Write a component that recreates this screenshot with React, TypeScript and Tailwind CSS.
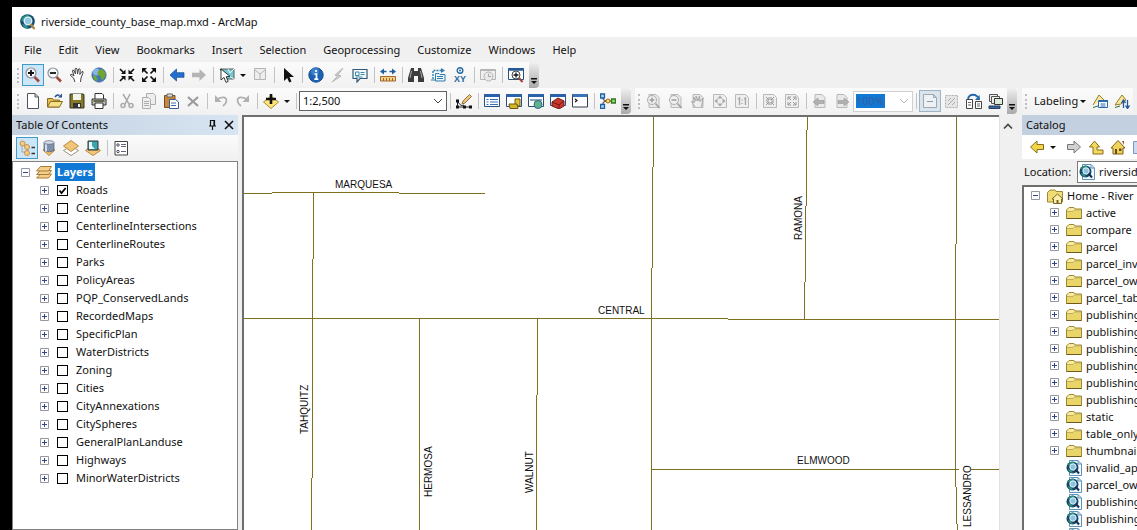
import { useState } from "react";
import type { ReactNode } from "react";

const layerNames = [
  "Roads",
  "Centerline",
  "CenterlineIntersections",
  "CenterlineRoutes",
  "Parks",
  "PolicyAreas",
  "PQP_ConservedLands",
  "RecordedMaps",
  "SpecificPlan",
  "WaterDistricts",
  "Zoning",
  "Cities",
  "CityAnnexations",
  "CitySpheres",
  "GeneralPlanLanduse",
  "Highways",
  "MinorWaterDistricts",
];

const menus = [
  "File",
  "Edit",
  "View",
  "Bookmarks",
  "Insert",
  "Selection",
  "Geoprocessing",
  "Customize",
  "Windows",
  "Help",
];

const catalogFolders = [
  "active",
  "compare",
  "parcel",
  "parcel_invalid",
  "parcel_owner",
  "parcel_table",
  "publishing",
  "publishing",
  "publishing",
  "publishing",
  "publishing",
  "publishing",
  "static",
  "table_only",
  "thumbnails",
];

const catalogMaps = ["invalid_apn", "parcel_owner", "publishing", "publishing", "publishing"];

// Street lines, one step per pixel drift
const roads = [
  "M0 76.5H28M28 75.5H155M155 76.5H241",
  "M69.5 75V142M68.5 142V361M67.5 361V2000",
  "M0 201.5H484M484 202.5H2000",
  "M175.5 201V2000",
  "M293.5 201V278M292.5 278V2000",
  "M409.5 0V50M408.5 50V151M407.5 151V2000",
  "M563.5 0V13M562.5 13V89M561.5 89V165M560.5 165V202",
  "M712.5 0V127M711.5 127V370M712.5 370V407M713.5 407V2000",
  "M407 352.5H715M727 352.5H2000",
];

const streets = [
  { name: "MARQUESA", x: 91, y: 71, vertical: false },
  { name: "CENTRAL", x: 354, y: 197, vertical: false },
  { name: "ELMWOOD", x: 553, y: 347, vertical: false },
  { name: "RAMONA", x: 558, y: 123, vertical: true },
  { name: "TAHQUITZ", x: 64, y: 317, vertical: true },
  { name: "HERMOSA", x: 188, y: 380, vertical: true },
  { name: "WALNUT", x: 289, y: 376, vertical: true },
  { name: "LESSANDRO", x: 727, y: 410, vertical: true },
];

const page = <path d="M3 1.5h7l3 3v10H3z" fill="#e9e9e9" stroke="#b9b9b9" />;

const glyphs: Record<string, ReactNode> = {
  zoomIn: (
    <>
      <path d="M9.5 10l4.5 4.5" stroke="#a0463c" strokeWidth="2.5" />
      <circle cx="6" cy="6" r="5" fill="#f4f8fb" stroke="#8d8f96" strokeWidth="1.2" />
      <path d="M3 6h6M6 3v6" stroke="#111" strokeWidth="1.8" />
    </>
  ),
  zoomOut: (
    <>
      <path d="M9.5 10l4.5 4.5" stroke="#a0463c" strokeWidth="2.5" />
      <circle cx="6" cy="6" r="5" fill="#f4f8fb" stroke="#8d8f96" strokeWidth="1.2" />
      <path d="M3 6h6" stroke="#111" strokeWidth="1.8" />
    </>
  ),
  hand: (
    <path
      d="M6 15L4.500 11 1.500 8.500Q1 7 3 7.500L5 9 3.500 4Q3.500 2.500 5 3.500L6.500 7 6 2Q7 .5 8 2l.6 5L9.500 2Q11 1 11.200 3L10.800 7.500 13 4.500Q14.500 4 14 6l-2 5-.5 4"
      fill="#fff"
      stroke="#444"
    />
  ),
  globe: (
    <>
      <circle cx="8" cy="8" r="7.200" fill="#3d78c4" stroke="#44648c" strokeWidth=".6" />
      <circle cx="5.500" cy="5" r="3.600" fill="#9cc7f0" opacity=".75" />
      <path d="M7 4l4-2 3 3 .5 4-2.500 4-2-1-.5-3-3-1zM2 8l3 1 1.500 3-1 2.500Q2 12.500 2 8z" fill="#72a52e" />
    </>
  ),
  shrink: (
    <>
      <path d="M1 2l4 4M15 2l-4 4M1 14l4-4M15 14l-4-4" stroke="#111" strokeWidth="1.700" />
      <path d="M6.500 2.500v4.500H2zM9.500 2.500v4.500H14zM6.500 13.500V9H2zM9.500 13.500V9H14z" fill="#111" />
    </>
  ),
  expand: (
    <>
      <path d="M2 2l4.500 4.500M14 2L9.500 6.500M2 14l4.500-4.500M14 14L9.500 9.500" stroke="#111" strokeWidth="1.700" />
      <path d="M1 1h5L1 6zM15 1h-5l5 5zM1 15h5l-5-5zM15 15h-5l5-5z" fill="#111" />
    </>
  ),
  back: <path d="M1 8l6.500-6v3.700H15v4.600H7.500V14z" fill="#2270d0" stroke="#14488f" strokeWidth=".7" />,
  forward: <path d="M15 8L8.500 2v3.700H1v4.600h7.500V14z" fill="#b5b5b5" />,
  selectFeatures: (
    <>
      <path d="M1 2h14v10H8z" fill="#78c8d0" stroke="#3a3a3a" strokeWidth=".8" />
      <path d="M9 2l2 4 4-4M8 8l7 4" stroke="#eef" fill="none" />
      <path d="M2 2v11l3-2.600 2 5 2.200-1-2-4.700 3.800-.3z" fill="#fff" stroke="#222" strokeWidth=".9" />
    </>
  ),
  clearSelection: (
    <>
      <path d="M2.500 1.500h11v11h-11z" fill="#eee" stroke="#b4b4b4" />
      <path d="M3 3l5 4v5M8 7l5-4" fill="none" stroke="#b4b4b4" />
    </>
  ),
  pointer: <path d="M4 1v13l3.200-3 2 4.500 2.300-1-2-4.500H14z" fill="#111" />,
  info: (
    <>
      <circle cx="8" cy="8" r="7.200" fill="#1b62b4" stroke="#164a8c" />
      <circle cx="7" cy="4.500" r="4" fill="#5e9fe0" opacity=".5" />
      <path d="M8 3v2M6.500 7H8.500v5M6.300 12.200h4" stroke="#fff" strokeWidth="1.700" fill="none" />
    </>
  ),
  lightning: <path d="M13 1L5 8l3 .6L2 15l9-6-3-1z" fill="#d4d4d4" stroke="#b5b5b5" />,
  popup: (
    <>
      <path d="M1 2.500h14v9H8L5 15v-3.500H1z" fill="#f4fafc" stroke="#355a75" strokeWidth="1.200" />
      <path d="M3.500 5h3.500v3.500H3.500zM8.500 5.500h4M8.500 7.500h4M3.500 10h7" stroke="#3a87a8" fill="none" />
    </>
  ),
  measure: (
    <>
      <path d="M3 4.500h3.500M9.500 4.500H13" stroke="#1d5e9c" strokeWidth="1.500" />
      <path d="M0 4.500L4 1.500v6zM16 4.500l-4-3v6z" fill="#1d5e9c" />
      <path d="M.5 9.500h15V14H.5z" fill="#f1cf83" stroke="#a5662b" />
      <path d="M3.500 11v3M6.500 11v3M9.500 11v3M12.500 11v3" stroke="#a5662b" />
    </>
  ),
  binoculars: (
    <>
      <path d="M3 1h3v3h4V1h3l3 10v4h-6V9H6v6H0v-4z" fill="#3c3c3c" />
      <path d="M3.500 4L2 11M12.500 4L14 11" stroke="#aaa" />
    </>
  ),
  route: (
    <>
      <path d="M3 12V3.500h9" fill="none" stroke="#2d7cab" strokeDasharray="2 1" strokeWidth="1.400" />
      <path d="M11 1l4 2.500L11 6z" fill="#2d7cab" />
      <path d="M5.500 6.500H9l1 1h5v6.500H5.500z" fill="#eaf5fb" stroke="#2d7cab" />
      <path d="M7 9.500h6M7 11.500h6M1 13h4" stroke="#2d7cab" />
    </>
  ),
  xy: (
    <>
      <circle cx="8" cy="3.500" r="2.800" fill="#fff" stroke="#2468a0" strokeWidth="1.400" />
      <circle cx="8" cy="3.500" r="1" fill="#2468a0" />
      <text x="8" y="15" textAnchor="middle" fill="#2468a0" className="font-['Liberation_Sans',sans-serif] text-[9px] font-bold">
        XY
      </text>
    </>
  ),
  time: (
    <>
      <path d="M.5 2.500h15v10H.5z" fill="#eee" stroke="#b5b5b5" />
      <path d="M.5 3h15" stroke="#b5b5b5" strokeWidth="2" />
      <circle cx="8.500" cy="9.500" r="4.500" fill="#e9e9e9" stroke="#b5b5b5" />
      <path d="M8.500 6.500v3h2.500" stroke="#aaa" fill="none" />
    </>
  ),
  viewer: (
    <>
      <path d="M.5 1.500h15v11H.5z" fill="#fff" stroke="#27507f" />
      <path d="M.5 2.500h15" stroke="#27599a" strokeWidth="2.500" />
      <path d="M11 11l3.500 4" stroke="#a0463c" strokeWidth="2" />
      <circle cx="8" cy="8" r="4" fill="#fff" stroke="#444" />
      <path d="M5.500 8h5M8 5.500v5" stroke="#111" strokeWidth="1.300" />
    </>
  ),
  newDoc: <path d="M2.500 .5h7.500l3.500 3.500v11.500h-11zM10 .5V4h3.500" fill="#fff" stroke="#4c5460" />,
  open: (
    <>
      <path d="M.5 14V5.500h5l1 1.500h6v7z" fill="#e2bf4e" stroke="#8a6d1c" />
      <path d="M.5 14l3-5.500h12L12.500 14z" fill="#f5e08a" stroke="#8a6d1c" />
      <path d="M8 4q2-3 4.500-1.500" stroke="#24508c" strokeWidth="1.500" fill="none" />
      <path d="M11 4.500h4V.5z" fill="#24508c" />
    </>
  ),
  save: (
    <>
      <path d="M1 1h13.500L15 2v13H1z" fill="#857923" stroke="#333" />
      <path d="M4 1h8v6H4z" fill="#f3f3ee" />
      <path d="M4 10h8v5H4z" fill="#333" />
      <path d="M9 11h2v3H9z" fill="#eee" />
    </>
  ),
  print: (
    <>
      <path d="M4 6V.5h7l1.500 1.500v4" fill="#fff" stroke="#333" />
      <path d="M1 6h14v6H1z" fill="#c4c4bc" stroke="#333" />
      <path d="M4 10h8v5.500H4z" fill="#fff" stroke="#333" />
      <path d="M2.500 8h11" stroke="#4a4a2a" strokeWidth="1.500" />
    </>
  ),
  cut: (
    <g fill="none" stroke="#aaa" strokeWidth="1.500">
      <path d="M4 1l6 10M11 1L6 11" />
      <circle cx="4" cy="12.500" r="2" />
      <circle cx="12" cy="12.500" r="2" />
    </g>
  ),
  copy: (
    <g fill="#eee" stroke="#adadad">
      <path d="M5.500 .5h7l2 2v9h-9z" />
      <path d="M1.500 4.500h6l2 2v9h-8z" />
      <path d="M3 8.500h5M3 10.500h5M3 12.500h5" />
    </g>
  ),
  paste: (
    <>
      <path d="M1.500 2.500h10.500v12h-10.500z" fill="#c9873e" stroke="#7a4d1c" />
      <path d="M4 1h5.500v3H4z" fill="#ddd" stroke="#666" />
      <path d="M6.500 6.500h6l3 2.500v6.500h-9z" fill="#fff" stroke="#3c5c8c" />
      <path d="M8 10h5M8 12.500h5" stroke="#3c6cae" />
    </>
  ),
  remove: <path d="M3 4l10 9M13 4L3 13" stroke="#9b9b9b" strokeWidth="2.200" />,
  undo: (
    <>
      <path d="M4 6q9-4 9.500 1.500Q13.500 10 10 13" fill="none" stroke="#b0b0b0" strokeWidth="1.700" />
      <path d="M2 2v7h6.500z" fill="#b0b0b0" />
    </>
  ),
  redo: (
    <>
      <path d="M12 6Q3 2 2.500 7.500 2.500 10 6 13" fill="none" stroke="#b0b0b0" strokeWidth="1.700" />
      <path d="M14 2v7H7.500z" fill="#b0b0b0" />
    </>
  ),
  addData: (
    <>
      <path d="M8 3l7.500 6L8 15.500.5 9z" fill="#ffe37c" stroke="#b18b2d" />
      <path d="M3 6h10M8 1v10" stroke="#111" strokeWidth="2.600" />
    </>
  ),
  editor: (
    <>
      <path d="M1.500 8v6H14M2 9q3 5 6 3" fill="none" stroke="#222" />
      <path d="M0 6.500h3v3H0zM0 12.500h3v3H0zM7 12.500h3v3H7zM13 12.500h3v3h-3z" fill="#111" />
      <path d="M6 11l1-3 6.500-6.500 2 2L9 10z" fill="#ecc57a" stroke="#7c5726" strokeWidth=".8" />
    </>
  ),
  tocWindow: (
    <>
      <path d="M.5 1.500h15v12H.5z" fill="#fff" stroke="#27507f" />
      <path d="M.5 2.500h15" stroke="#2a62ab" strokeWidth="3" />
      <path d="M2.500 6.500h2M6 6.500h8M2.500 9h2M6 9h8M2.500 11.500h2M6 11.500h8" stroke="#3970b4" />
    </>
  ),
  catalogWindow: (
    <>
      <path d="M.5 1.500h15v12H.5z" fill="#fff" stroke="#27507f" />
      <path d="M.5 2.500h15" stroke="#2a62ab" strokeWidth="3" />
      <path d="M9 6h5v7H9z" fill="#e0c238" stroke="#6e5a12" />
      <path d="M3 11h8l1 4.500H4z" fill="#d7b727" stroke="#6e5a12" />
    </>
  ),
  searchWindow: (
    <>
      <path d="M.5 1.500h15v12H.5z" fill="#fff" stroke="#27507f" />
      <path d="M.5 2.500h15" stroke="#2a62ab" strokeWidth="3" />
      <path d="M2 7h12" stroke="#8aa3bd" strokeWidth="2" />
      <circle cx="10" cy="11.500" r="4" fill="#62b08c" stroke="#2d6a88" />
    </>
  ),
  toolbox: (
    <>
      <path d="M.5 1.500h15v11H.5z" fill="#fff" stroke="#27507f" />
      <path d="M.5 2.500h15" stroke="#2a62ab" strokeWidth="3" />
      <path d="M2 9l6-4 6 3v5l-5 3-7-3z" fill="#c8372a" stroke="#741b14" />
      <path d="M2 9l7 3 5-4M9 12v3.500" stroke="#741b14" fill="none" />
    </>
  ),
  python: (
    <>
      <path d="M.5 1.500h15v12.500H.5z" fill="#fff" stroke="#333c4c" />
      <path d="M.5 2.500h15" stroke="#3c73b8" strokeWidth="3" />
      <path d="M3 6l2 1.500L3 9" stroke="#111" fill="none" strokeWidth="1.200" />
    </>
  ),
  model: (
    <>
      <path d="M3 3.500v3l3 1.500M3 13V9.500L6 8h6" stroke="#333" fill="none" />
      <path d="M.5 1h4v4h-4zM.5 11.500h4v4h-4z" fill="#a8d4f4" stroke="#1d5fa4" strokeWidth="1.300" />
      <circle cx="8" cy="8" r="2" fill="#ffdc5c" stroke="#a26b16" />
      <path d="M11.500 6h4v4h-4z" fill="#9cd67c" stroke="#2f7a1e" strokeWidth="1.300" />
    </>
  ),
  pageZoomIn: (
    <>
      {page}
      <circle cx="6" cy="7" r="4.500" fill="#f0f0f0" stroke="#adadad" />
      <path d="M3.500 7h5M6 4.500v5M9.500 10.500L13.500 15" stroke="#9d9d9d" strokeWidth="1.500" />
    </>
  ),
  pageZoomOut: (
    <>
      {page}
      <circle cx="6" cy="7" r="4.500" fill="#f0f0f0" stroke="#adadad" />
      <path d="M3.500 7h5M9.500 10.500L13.500 15" stroke="#9d9d9d" strokeWidth="1.500" />
    </>
  ),
  pageHand: (
    <>
      {page}
      <path d="M5 14L1.500 8.500l3 1L3.500 4l2.500 4V3l2 5 1.500-5 .5 5.500L13 5l-1.500 9" fill="#eee" stroke="#a5a5a5" />
    </>
  ),
  pageFull: (
    <>
      <path d="M1.500 1.500h10l3 3v10h-13z" fill="#eee" stroke="#b9b9b9" />
      <path d="M8 2.500l2.500 3h-5zM8 13.500l2.500-3h-5zM2.500 8l3-2.500v5zM13.500 8l-3-2.500v5z" fill="#a5a5a5" />
    </>
  ),
  pageActual: (
    <>
      <path d="M1.500 1.500h10l3 3v10h-13z" fill="#eee" stroke="#b9b9b9" />
      <path d="M4 6l1.500-1v7M10 6l1.500-1v7M8 6.500v1M8 10v1" stroke="#a5a5a5" strokeWidth="1.300" fill="none" />
    </>
  ),
  pageShrink: (
    <>
      <path d="M1.500 1.500h10l3 3v10h-13z" fill="#eee" stroke="#b9b9b9" />
      <path d="M4 4l3 3V4M7 7H4M12 4L9 7h3M9 7V4M4 12l3-3H4M7 9v3M12 12L9 9h3M9 9v3" stroke="#999" fill="none" />
    </>
  ),
  pageExpand: (
    <>
      <path d="M1.500 1.500h10l3 3v10h-13z" fill="#eee" stroke="#b9b9b9" />
      <path d="M7 7L4 4h3M4 4v3M9 7l3-3v3M12 4H9M7 9l-3 3v-3M4 12h3M9 9l3 3H9M12 12V9" stroke="#999" fill="none" />
    </>
  ),
  pageBack: (
    <>
      {page}
      <path d="M1 9l5-4v2.500h6v3H6V13z" fill="#b0b0b0" stroke="#999" strokeWidth=".6" />
    </>
  ),
  pageForward: (
    <>
      {page}
      <path d="M15 9l-5-4v2.500H4v3h6V13z" fill="#b0b0b0" stroke="#999" strokeWidth=".6" />
    </>
  ),
  draft: (
    <>
      <path d="M1.500 1.500h10l3 3v10h-13zM11.500 1.500v3h3" fill="#eef1f4" stroke="#9daab5" />
      <path d="M5 8.500h6" stroke="#8d9aa5" />
    </>
  ),
  frame: (
    <>
      <path d="M1.500 2.500h12v12h-12z" fill="#e6e6e6" stroke="#b0b0b0" strokeDasharray="2 1" />
      <path d="M4 12l7-7M4 8l3-3M8 12l3-3" stroke="#aaa" />
    </>
  ),
  layout: (
    <>
      <path d="M2 7q0-6 7-5l3 2" fill="none" stroke="#2268ac" strokeWidth="2" />
      <path d="M14 7H9l4.500-5z" fill="#2268ac" />
      <path d="M.5 6.500h6v9h-6zM9.500 8.500h6v7h-6z" fill="#fff" stroke="#444" />
      <path d="M2 9.500h3M2 12h3M11 11h3M11 13h3" stroke="#666" />
    </>
  ),
  drivenPages: (
    <>
      <path d="M1.500 1.500h8v7h-8z" fill="#eee" stroke="#555" />
      <path d="M3.500 3.500h8v7h-8z" fill="#eee" stroke="#555" />
      <path d="M6.500 5.500h8v6h-8z" fill="#dcefd9" stroke="#333" />
      <path d="M1 13h11v2.500H1z" fill="#3b6799" stroke="#23405f" />
    </>
  ),
  labelManager: (
    <>
      <path d="M1 12L7 2l5 5" fill="#f8e9a2" stroke="#9a7c26" />
      <path d="M1 14.500L6 13" stroke="#2f6f3a" />
      <path d="M6.500 7.500h9v7h-9z" fill="#fff" stroke="#2b67ad" />
      <path d="M7 8h9" stroke="#2b67ad" strokeWidth="2" />
      <path d="M8.500 11h5M8.500 13h5" stroke="#2b67ad" />
    </>
  ),
  labelPriority: (
    <>
      <path d="M1 12L8 2l4 5-5 4z" fill="#f8e9a2" stroke="#9a7c26" />
      <path d="M1 14.500L6 13" stroke="#2f6f3a" />
      <path d="M9.500 15V8M7.500 10l2-3 2 3M13.500 7v8M11.500 12.500l2 3 2-3" stroke="#20589c" fill="none" strokeWidth="1.300" />
    </>
  ),
  drawingOrder: (
    <>
      <path d="M3 4v8h4M4 4l4 3M9 9v4" stroke="#a8a8a8" fill="none" />
      <g fill="#f4cb8a" stroke="#c19452">
        <circle cx="3.500" cy="3.500" r="2.500" />
        <circle cx="8" cy="7" r="2.500" />
        <circle cx="8" cy="13" r="2.500" />
      </g>
      <path d="M12.500 7.500h4M12.500 13.500h4" stroke="#333" strokeWidth="1.500" />
    </>
  ),
  source: (
    <>
      <path d="M2 10l6-3 6 3-6 5.500z" fill="#efc373" stroke="#b98a3c" />
      <path d="M3 2.500v8q5 3 10 0v-8z" fill="#7f90ab" stroke="#56637a" strokeWidth=".7" />
      <path d="M5 3v8.500" stroke="#d5dded" strokeWidth="2" />
      <ellipse cx="8" cy="2.500" rx="5" ry="1.800" fill="#d8deea" stroke="#56637a" strokeWidth=".7" />
    </>
  ),
  visibility: (
    <>
      <path d="M8 6l7.500 4.500L8 15.500.5 10.500z" fill="#fff" stroke="#a0937a" />
      <path d="M8 .5L15.500 6 8 11.500.5 6z" fill="#f2c678" stroke="#b98a3c" />
    </>
  ),
  selection: (
    <>
      <path d="M8 5.500l7.500 5L8 15.500.5 10.500z" fill="#f2c678" stroke="#b98a3c" />
      <path d="M3 1h10v9H3z" fill="#3aa6b0" stroke="#333" />
      <path d="M4 2h3v4l3 3H4z" fill="#eaf7f8" />
    </>
  ),
  options: (
    <>
      <path d="M2 1.500h12.500v13.500H2z" fill="#fff" stroke="#444" />
      <path d="M8 4.500h5M8 11.500h5M8 6.500h5" stroke="#667" />
      <circle cx="5" cy="5" r="1.200" fill="none" stroke="#445" />
      <circle cx="5" cy="11.500" r="1.200" fill="none" stroke="#445" />
    </>
  ),
  layers: (
    <g fill="#f4cf8c" stroke="#a87c35">
      <path d="M.5 14l4-4h11l-3 4z" />
      <path d="M.5 10.500l4-4h11l-3 4z" />
      <path d="M.5 7l4-4.500h11L12.500 7z" />
    </g>
  ),
  folder: (
    <>
      <path d="M.5 13.500V5L3 2.500h5l1 1.500h6.500v9.500z" fill="#f7ec9c" stroke="#a08732" />
      <path d="M1 13V7h6l1.500-1.500H15V13z" fill="#e9d568" />
      <path d="M1 6.500h6L8.500 5H15" stroke="#9c8430" strokeWidth=".6" fill="none" />
      <path d="M.5 13.500h15" stroke="#6f5b1d" />
    </>
  ),
  homeFolder: (
    <>
      <path d="M.5 14V4.500L3 2h5l1 1.500h6.500V14z" fill="#f0dc74" stroke="#a08732" />
      <path d="M6.500 15.500V11H5l5.500-5L16 11h-1.500v4.500z" fill="#f9efad" stroke="#7c6522" />
      <path d="M9.500 12h2v3.500h-2z" fill="#7c6522" />
    </>
  ),
  home: (
    <>
      <path d="M3 15V9H1l7-7.500L15 9h-2v6z" fill="#f0d45a" stroke="#7a611a" />
      <path d="M12 2h2v4z" fill="#a44a1e" />
      <path d="M5 10h2v5H5zM9 9.500h2.500v2.500H9z" fill="#6b4d14" />
    </>
  ),
  upLevel: <path d="M5 15V8H1.500L6.500 2l5 6H9v3h6v4z" fill="#f5d95c" stroke="#8a6d1c" />,
  goBack: <path d="M1.500 8L8 2v3.500h6.500v5H8V14z" fill="#f3d648" stroke="#8a6d1c" />,
  goForward: <path d="M14.500 8L8 2v3.500H1.500v5H8V14z" fill="#d2d2d2" stroke="#777" />,
  connect: <path d="M1.500 2.500h13v12h-13z" fill="#cfdcf0" stroke="#7f97bd" />,
  mapDoc: (
    <>
      <path d="M3.500 .5h8.500l3.500 3.500v11.500h-12z" fill="#f3f9fd" stroke="#5d93bd" />
      <path d="M12 .5V4h3.500" fill="none" stroke="#5d93bd" />
      <circle cx="6.500" cy="7.500" r="6" fill="#17456a" />
      <path d="M2 5q2-4 6-3l2 3-3 2zM2 9l3 1 2 3q-4 0-5-4z" fill="#2c9480" />
      <circle cx="7" cy="7" r="3.200" fill="#8cc3dd" stroke="#e8f4fb" />
      <path d="M9.500 9.500L13 13.500" stroke="#17324d" strokeWidth="2" />
    </>
  ),
  arcmap: (
    <>
      <circle cx="7.500" cy="7.500" r="7.300" fill="#184a72" />
      <path d="M1 6Q3 1 8 1l4 3-5 2-2 3zM2 10l4 1 3 4Q4 15 2 10z" fill="#2b9a86" />
      <circle cx="8" cy="7" r="3.800" fill="#8fc7e4" stroke="#e6f2f8" strokeWidth="1.300" />
      <path d="M10.500 10l4 5" stroke="#a88742" strokeWidth="2.200" />
    </>
  ),
};

function Icon({ name }: { name: string }) {
  return (
    <svg width="16" height="16" viewBox="0 0 16 16" fill="none" className="shrink-0" aria-hidden>
      {glyphs[name]}
    </svg>
  );
}

function ToolButton({ name, active = false }: { name: string; active?: boolean }) {
  return (
    <button
      type="button"
      aria-label={name}
      className={`flex h-[22px] w-[22px] shrink-0 items-center justify-center border ${
        active ? "border-[#3f9bcb] bg-[#cde6f7]" : "border-transparent"
      }`}
    >
      <Icon name={name} />
    </button>
  );
}

function Tools({ names }: { names: string[] }) {
  return (
    <>
      {names.map((name) => (
        <ToolButton key={name} name={name} />
      ))}
    </>
  );
}

function Separator() {
  return (
    <div className="flex h-4 w-[6px] shrink-0 justify-center">
      <div className="w-px bg-[#c3c3c3]" />
    </div>
  );
}

function Grip() {
  return <div className="mx-[3px] h-[15px] shrink-0 border-l-2 border-dotted border-[#bdbdbd]" />;
}

function Caret() {
  return (
    <svg width="11" height="16" viewBox="0 0 11 16" className="shrink-0" aria-hidden>
      <path d="M2 7h6L5 10z" fill="#111" />
    </svg>
  );
}

// Grey tab closing each toolbar
function Overflow() {
  return (
    <button
      type="button"
      aria-label="Toolbar options"
      className="flex h-[26px] w-[10px] shrink-0 items-end justify-center rounded-r-sm bg-linear-to-b from-[#f0f0f0] to-[#a9a9a9] pb-[3px]"
    >
      <svg width="6" height="7" viewBox="0 0 6 7" aria-hidden>
        <path d="M0 0h6v1.500H0zM0 3h6L3 6z" fill="#111" />
      </svg>
    </button>
  );
}

function Expander({ open = false, label }: { open?: boolean; label: string }) {
  return (
    <button type="button" aria-label={label} className="shrink-0">
      <svg width="9" height="9" viewBox="0 0 9 9" className="block" aria-hidden>
        <path d="M.5 .5h8v8h-8z" fill="#fff" stroke="#9398a2" />
        <path d={open ? "M2 4.500h5" : "M2 4.500h5M4.500 2v5"} stroke="#33458a" />
      </svg>
    </button>
  );
}

function LayerRow({ name, checked, onToggle }: { name: string; checked: boolean; onToggle: () => void }) {
  return (
    <li className="flex h-[18px] items-center pl-[27px]">
      <Expander label={`Expand ${name}`} />
      <label className="ml-2 flex items-center gap-2">
        <span className="relative h-[11px] w-[11px]">
          <input
            type="checkbox"
            checked={checked}
            onChange={onToggle}
            className="block h-[11px] w-[11px] appearance-none border border-black bg-white"
          />
          {checked && (
            <svg width="11" height="11" viewBox="0 0 11 11" className="pointer-events-none absolute inset-0" aria-hidden>
              <path d="M2.500 5.500l2 2.500L8.700 3" fill="none" stroke="#000" strokeWidth="1.800" />
            </svg>
          )}
        </span>
        <span>{name}</span>
      </label>
    </li>
  );
}

function TableOfContents() {
  const [visible, setVisible] = useState<string[]>(["Roads"]);

  const toggle = (name: string) =>
    setVisible((prev) => (prev.includes(name) ? prev.filter((n) => n !== name) : [...prev, name]));

  return (
    <aside className="flex w-[226px] shrink-0 flex-col">
      <header className="flex h-5 items-center bg-linear-to-r from-[#c3d0df] to-[#d7e4f2] pr-px pl-1">
        <h2 className="flex-1">Table Of Contents</h2>
        <button type="button" aria-label="Pin">
          <svg width="16" height="12" viewBox="0 0 16 12" fill="none" stroke="#111" aria-hidden>
            <path d="M5.500 6.500v-5h4v5M9 1v6M4 7h7M7.500 7v4" strokeWidth="1.200" />
          </svg>
        </button>
        <button type="button" aria-label="Close">
          <svg width="16" height="12" viewBox="0 0 16 12" fill="none" stroke="#111" aria-hidden>
            <path d="M4 2l8 8M12 2l-8 8" strokeWidth="1.600" />
          </svg>
        </button>
      </header>
      <div className="flex h-[26px] items-center bg-linear-to-b from-[#fbfbfb] to-[#f0f0f0] pl-1">
        <ToolButton name="drawingOrder" active />
        <Tools names={["source", "visibility", "selection"]} />
        <Separator />
        <ToolButton name="options" />
      </div>
      <div className="flex-1 border border-[#828282] bg-white pt-px">
        <div className="flex h-[18px] items-center gap-[6px] pl-2">
          <Expander open label="Collapse Layers" />
          <span className="flex items-center gap-[3px]">
            <Icon name="layers" />
            <span className="bg-[#0f79d5] px-[2px] leading-[18px] font-bold text-white">Layers</span>
          </span>
        </div>
        <ul>
          {layerNames.map((name) => (
            <LayerRow key={name} name={name} checked={visible.includes(name)} onToggle={() => toggle(name)} />
          ))}
        </ul>
      </div>
    </aside>
  );
}

function MapView() {
  return (
    <main className="ml-1 flex min-w-0 flex-1">
      <div className="min-w-0 flex-1 overflow-hidden border-t-2 border-l-2 border-[#6e6e6e] bg-white">
        <svg className="h-full w-full" role="img" aria-label="Street map">
          <g fill="none" stroke="#7f701d" shapeRendering="crispEdges">
            {roads.map((d) => (
              <path key={d} d={d} />
            ))}
          </g>
          <g fill="#111" className="font-['Liberation_Sans',sans-serif] text-[10px]">
            {streets.map((s) => (
              <text key={s.name} transform={`translate(${s.x} ${s.y})${s.vertical ? " rotate(-90)" : ""}`}>
                {s.name}
              </text>
            ))}
          </g>
        </svg>
      </div>
      <div className="flex w-[17px] flex-col items-center border-l border-[#e2e2e2] bg-[#f0f0f0] pt-2">
        <svg width="10" height="7" viewBox="0 0 10 7" fill="none" aria-hidden>
          <path d="M1 5.500l4-4 4 4" stroke="#444" strokeWidth="1.700" />
        </svg>
      </div>
    </main>
  );
}

function Catalog() {
  return (
    <aside className="ml-[6px] flex w-[115px] shrink-0 flex-col overflow-hidden whitespace-nowrap">
      <header className="flex h-5 items-center bg-[#c3d0df] pl-1">
        <h2>Catalog</h2>
      </header>
      <div className="flex h-6 shrink-0 items-center bg-white pl-1">
        <ToolButton name="goBack" />
        <Caret />
        <div className="w-1 shrink-0" />
        <Tools names={["goForward", "upLevel", "home", "connect"]} />
      </div>
      <div className="flex h-[26px] shrink-0 items-center gap-[6px] pl-[2px]">
        <span>Location:</span>
        <button type="button" className="flex h-[22px] w-60 shrink-0 items-center gap-1 border border-[#7a7a7a] bg-white pl-px">
          <Icon name="mapDoc" />
          riverside
        </button>
      </div>
      <div className="min-h-0 flex-1 overflow-hidden border-t-2 border-l-2 border-[#6e6e6e] bg-white">
        <div className="flex h-[17px] items-center pl-[7px]">
          <Expander open label="Collapse Home" />
          <span className="ml-[7px] flex items-center gap-1">
            <Icon name="homeFolder" />
            Home - River
          </span>
        </div>
        <ul>
          {catalogFolders.map((name, i) => (
            <li key={i} className="flex h-[17px] items-center gap-[7px] pl-[26px]">
              <Expander label={`Expand ${name}`} />
              <span className="flex items-center gap-1">
                <Icon name="folder" />
                {name}
              </span>
            </li>
          ))}
          {catalogMaps.map((name, i) => (
            <li key={i} className="flex h-[17px] items-center gap-1 pl-[42px]">
              <Icon name="mapDoc" />
              {name}
            </li>
          ))}
        </ul>
      </div>
    </aside>
  );
}

export default function App() {
  return (
    <div className="flex h-screen overflow-hidden bg-black pt-[7px] pl-3 font-['Noto_Sans',sans-serif] text-[11px] leading-4 text-[#111]">
      <div className="flex min-w-0 flex-1 flex-col bg-[#f0f0f0]">
        <header className="flex h-[30px] shrink-0 items-center gap-[5px] bg-white pl-2">
          <Icon name="arcmap" />
          <h1>riverside_county_base_map.mxd - ArcMap</h1>
        </header>

        <nav className="flex h-[25px] shrink-0 items-center gap-[17px] pl-3">
          {menus.map((menu) => (
            <button key={menu} type="button">
              {menu}
            </button>
          ))}
        </nav>

        {/* Tools toolbar */}
        <div className="flex h-[26px] shrink-0">
          <div className="flex items-center bg-linear-to-b from-[#fbfbfb] to-[#f1f1f1] pl-[2px]">
            <Grip />
            <ToolButton name="zoomIn" active />
            <Tools names={["zoomOut", "hand", "globe"]} />
            <Separator />
            <Tools names={["shrink", "expand"]} />
            <Separator />
            <Tools names={["back", "forward"]} />
            <Separator />
            <ToolButton name="selectFeatures" />
            <Caret />
            <ToolButton name="clearSelection" />
            <Separator />
            <ToolButton name="pointer" />
            <Separator />
            <Tools names={["info", "lightning", "popup"]} />
            <Separator />
            <ToolButton name="measure" />
            <Separator />
            <Tools names={["binoculars", "route", "xy"]} />
            <Separator />
            <ToolButton name="time" />
            <Separator />
            <ToolButton name="viewer" />
            <div className="w-[2px]" />
            <Overflow />
          </div>
        </div>

        {/* Standard, Layout and Labeling toolbars */}
        <div className="flex h-[27px] shrink-0 items-start overflow-hidden">
          <div className="flex h-[26px] shrink-0 items-center bg-linear-to-b from-[#fbfbfb] to-[#f1f1f1] pl-[2px]">
            <Grip />
            <Tools names={["newDoc", "open", "save", "print"]} />
            <Separator />
            <Tools names={["cut", "copy", "paste", "remove"]} />
            <Separator />
            <Tools names={["undo", "redo"]} />
            <Separator />
            <ToolButton name="addData" />
            <Caret />
            <Separator />
            <span className="relative flex items-center">
              <select
                aria-label="Map scale"
                className="h-5 w-[148px] appearance-none border border-[#5f6368] bg-white pl-[3px] text-[11px] leading-4"
              >
                <option>1:2,500</option>
              </select>
              <svg width="10" height="6" viewBox="0 0 10 6" fill="none" className="pointer-events-none absolute right-1" aria-hidden>
                <path d="M1 1l4 4 4-4" stroke="#444" />
              </svg>
            </span>
            <Separator />
            <ToolButton name="editor" />
            <Separator />
            <Tools names={["tocWindow", "catalogWindow", "searchWindow", "toolbox", "python"]} />
            <Separator />
            <ToolButton name="model" />
            <div className="w-[2px]" />
            <Overflow />
          </div>
          <div className="ml-1 flex h-[26px] shrink-0 items-center bg-linear-to-b from-[#fbfbfb] to-[#f1f1f1]">
            <Grip />
            <Tools names={["pageZoomIn", "pageZoomOut", "pageHand", "pageFull", "pageActual"]} />
            <Separator />
            <Tools names={["pageShrink", "pageExpand"]} />
            <Separator />
            <Tools names={["pageBack", "pageForward"]} />
            <span className="relative flex items-center">
              <span className="pointer-events-none absolute left-[3px] bg-[#0f79d5] pr-px leading-[14px] text-[#3d5f9f]">100%</span>
              <select
                aria-label="Page zoom"
                className="h-[21px] w-[60px] appearance-none border border-[#d0d0d0] bg-white pl-[3px] text-[11px] text-transparent"
              >
                <option>100%</option>
              </select>
              <svg width="10" height="6" viewBox="0 0 10 6" fill="none" className="pointer-events-none absolute right-1" aria-hidden>
                <path d="M1 1l4 4 4-4" stroke="#b5b5b5" />
              </svg>
            </span>
            <Separator />
            <button
              type="button"
              aria-label="Toggle draft mode"
              className="flex h-[22px] w-[22px] items-center justify-center border border-[#9cb4c6] bg-[#dbe4ea]"
            >
              <Icon name="draft" />
            </button>
            <Tools names={["frame", "layout", "drivenPages"]} />
            <Overflow />
          </div>
          <div className="ml-[5px] flex h-[26px] shrink-0 items-center bg-linear-to-b from-[#fbfbfb] to-[#f1f1f1]">
            <Grip />
            <button type="button" className="flex items-center pl-1">
              Labeling
              <Caret />
            </button>
            <Tools names={["labelManager", "labelPriority"]} />
          </div>
        </div>

        <div className="flex min-h-0 flex-1">
          <TableOfContents />
          <MapView />
          <Catalog />
        </div>
      </div>
    </div>
  );
}
